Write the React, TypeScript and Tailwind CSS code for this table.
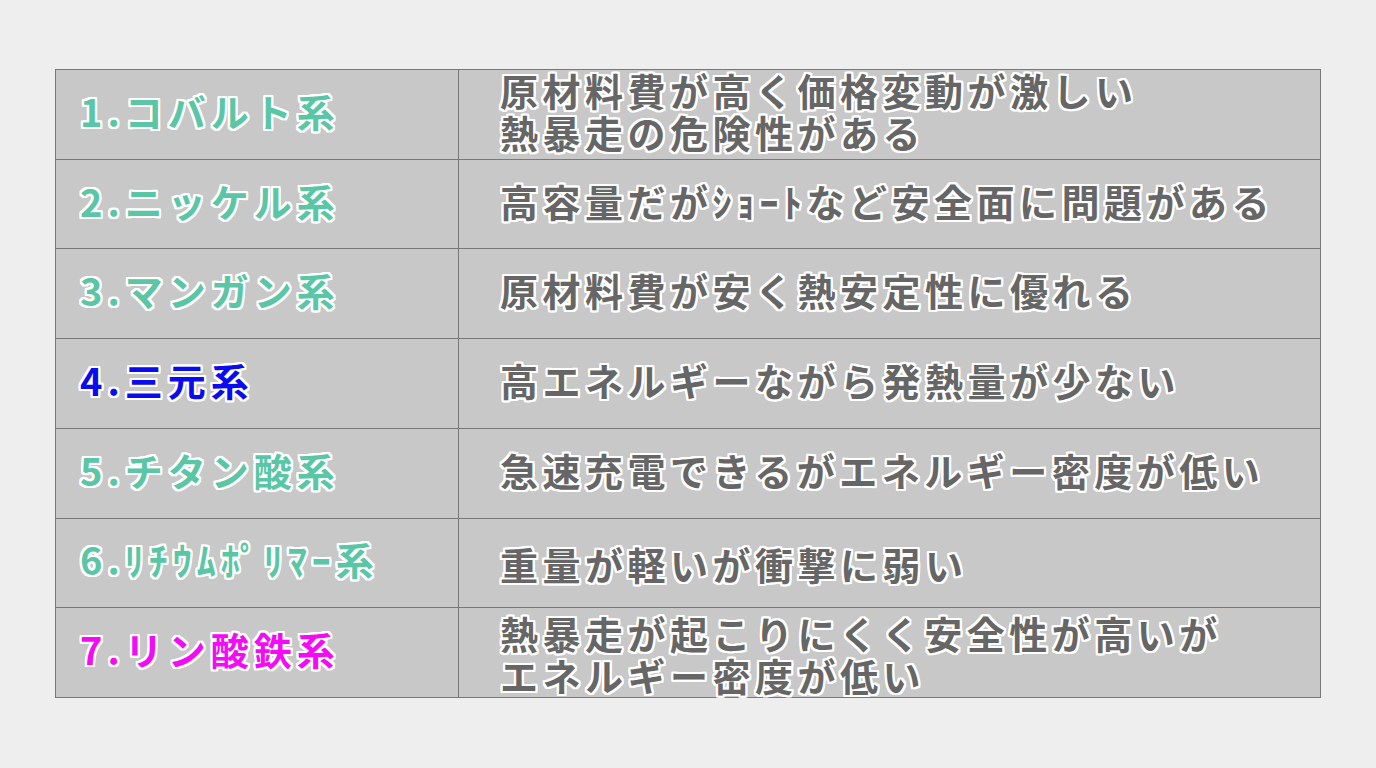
const rows: { label: string; color: string; desc: string[]; descClass?: string }[] = [
  { label: '1.コバルト系', color: 'text-[#5ac6a6]', desc: ['原材料費が高く価格変動が激しい', '熱暴走の危険性がある'] },
  { label: '2.ニッケル系', color: 'text-[#5ac6a6]', desc: ['高容量だがｼｮｰﾄなど安全面に問題がある'] },
  { label: '3.マンガン系', color: 'text-[#5ac6a6]', desc: ['原材料費が安く熱安定性に優れる'] },
  { label: '4.三元系', color: 'text-[#0b0bf0]', desc: ['高エネルギーながら発熱量が少ない'] },
  { label: '5.チタン酸系', color: 'text-[#5ac6a6]', desc: ['急速充電できるがエネルギー密度が低い'] },
  { label: '6.ﾘﾁｳﾑﾎﾟﾘﾏｰ系', color: 'text-[#5ac6a6]', desc: ['重量が軽いが衝撃に弱い'], descClass: 'mt-[10px]' },
  { label: '7.リン酸鉄系', color: 'text-[#f50af5]', desc: ['熱暴走が起こりにくく安全性が高いが', 'エネルギー密度が低い'], descClass: 'mt-[10px]' },
];

// white outline around the lettering
const outline =
  '[text-shadow:2px_0_0_#fff,-2px_0_0_#fff,0_2px_0_#fff,0_-2px_0_#fff,2px_2px_0_#fff,-2px_-2px_0_#fff,2px_-2px_0_#fff,-2px_2px_0_#fff,1px_2px_0_#fff,2px_1px_0_#fff,-1px_-2px_0_#fff,-2px_-1px_0_#fff,-1px_2px_0_#fff,1px_-2px_0_#fff,2px_-1px_0_#fff,-2px_1px_0_#fff]';

export default function App() {
  return (
    <div className="min-h-[768px] w-[1376px] bg-[#eeeeee] pt-[69px] pl-[55px] font-['Noto_Sans_CJK_JP','Noto_Sans',sans-serif]">
      <div className="grid h-[629px] w-[1266px] grid-cols-[402px_1fr] grid-rows-7 gap-px bg-[#787878] p-px">
        {rows.map((r) => (
          <div key={r.label} className="contents">
            <div className="flex items-center bg-[#c8c8c8] pb-[7px] pl-[24px]">
              <span
                className={`text-[38px] leading-[42px] font-bold tracking-[5px] ${r.color} ${outline}`}
              >
                {r.label}
              </span>
            </div>
            <div className="flex items-center bg-[#c8c8c8] pb-[7px] pl-[41px]">
              <div
                className={`text-[38px] leading-[42px] font-bold tracking-[4.5px] text-[#666666] ${outline} ${r.descClass ?? ''}`}
              >
                {r.desc.map((d) => (
                  <div key={d} className="whitespace-nowrap">
                    {d}
                  </div>
                ))}
              </div>
            </div>
          </div>
        ))}
      </div>
    </div>
  );
}
